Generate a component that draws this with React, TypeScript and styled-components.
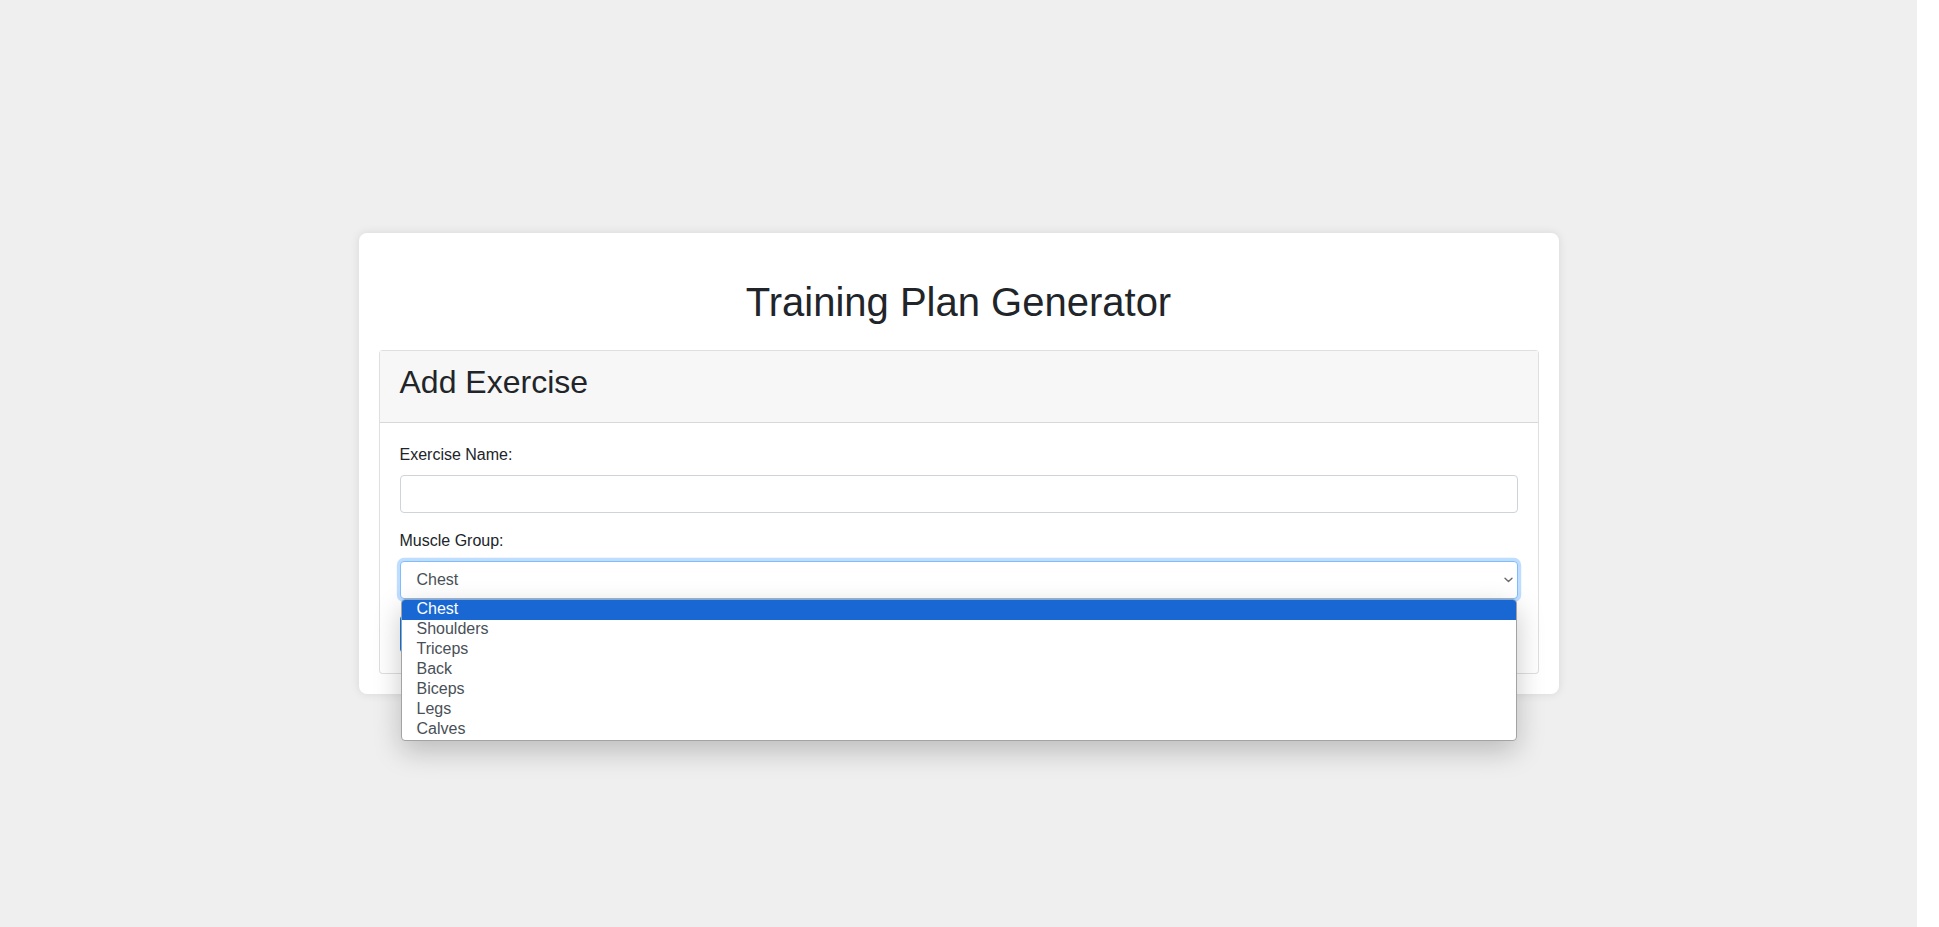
import React, { useState } from 'react';
import styled, { createGlobalStyle, css } from 'styled-components';

const GlobalStyle = createGlobalStyle`
  html,
  body {
    margin: 0;
    padding: 0;
    background: #fff;
  }
  body {
    font-family: 'Liberation Sans', Arial, Helvetica, sans-serif;
    color: #212529;
  }
  * {
    box-sizing: border-box;
  }
`;

const MUSCLE_GROUPS = ['Chest', 'Shoulders', 'Triceps', 'Back', 'Biceps', 'Legs', 'Calves'];

const Shell = styled.div`
  display: flex;
  min-height: 100vh;
`;

const Page = styled.main`
  flex: 1;
  background: #efefef;
  display: flex;
  align-items: center;
  justify-content: center;
`;

const Gutter = styled.div`
  width: 22px;
  flex-shrink: 0;
  background: #fff;
`;

const Card = styled.div`
  width: 1200px;
  background: #fff;
  border-radius: 8px;
  box-shadow: 0 0 10px rgba(0, 0, 0, 0.1);
  padding: 20px;
`;

const Title = styled.h1`
  margin: 25px 0 24px;
  font-size: 40px;
  font-weight: 400;
  line-height: 1.2;
  text-align: center;
  color: #212529;
`;

const Panel = styled.section`
  border: 1px solid rgba(0, 0, 0, 0.125);
  border-radius: 4px;
  background: #fff;
`;

const PanelHeader = styled.header`
  background: #f7f7f7;
  padding: 12px 20px;
  border-bottom: 1px solid rgba(0, 0, 0, 0.125);

  h2 {
    margin: 0 0 8px;
    font-size: 32px;
    font-weight: 400;
    line-height: 1.2;
    color: #212529;
  }
`;

const PanelBody = styled.form`
  padding: 20px;
`;

const Field = styled.div`
  margin-bottom: 16px;
`;

const Label = styled.label`
  display: block;
  margin-bottom: 8px;
  font-size: 16px;
  line-height: 1.5;
  color: #212529;
`;

const controlStyles = css<{ $focused?: boolean }>`
  display: block;
  width: 100%;
  height: 38px;
  padding: 6px 12px;
  font-family: inherit;
  font-size: 16px;
  line-height: 1.5;
  color: #495057;
  background: #fff;
  border: 1px solid #ced4da;
  border-radius: 4px;
  outline: none;

  ${p =>
    p.$focused &&
    css`
      border-color: #80bdff;
      box-shadow: 0 0 0 3.2px rgba(0, 123, 255, 0.25);
    `}
`;

const TextInput = styled.input<{ $focused?: boolean }>`
  ${controlStyles}
`;

const SelectWrap = styled.div`
  position: relative;
`;

const Select = styled.select<{ $focused?: boolean }>`
  ${controlStyles}
  appearance: none;
  -webkit-appearance: none;
  padding-left: 16px;
  padding-right: 24px;
`;

const Chevron = styled.svg`
  position: absolute;
  top: 16px;
  right: 5px;
  width: 9px;
  height: 6px;
  pointer-events: none;
`;

const OptionList = styled.ul`
  position: absolute;
  top: 100%;
  left: 1px;
  right: 1px;
  z-index: 10;
  margin: 0;
  padding: 0;
  list-style: none;
  background: #fff;
  border: 1px solid #a3a3a3;
  border-radius: 4px;
  overflow: hidden;
  box-shadow: 0 10px 28px rgba(0, 0, 0, 0.22);
`;

const OptionItem = styled.li<{ $active?: boolean }>`
  height: 20px;
  padding-left: 15px;
  font-size: 16px;
  line-height: 17px;
  color: ${p => (p.$active ? '#fff' : '#495057')};
  background: ${p => (p.$active ? '#1967d2' : 'transparent')};
  cursor: default;
`;

const SubmitButton = styled.button`
  display: inline-block;
  height: 38px;
  padding: 6px 12px;
  font-family: inherit;
  font-size: 16px;
  line-height: 1.5;
  color: #fff;
  background: #007bff;
  border: 1px solid #007bff;
  border-radius: 4px;
`;

const App: React.FC = () => {
  const [name, setName] = useState('');
  const [group, setGroup] = useState('Chest');
  const [open, setOpen] = useState(true);

  return (
    <>
      <GlobalStyle />
      <Shell>
        <Page>
          <Card>
            <Title>Training Plan Generator</Title>
            <Panel>
              <PanelHeader>
                <h2>Add Exercise</h2>
              </PanelHeader>
              <PanelBody onSubmit={e => e.preventDefault()}>
                <Field>
                  <Label htmlFor="exercise-name">Exercise Name:</Label>
                  <TextInput
                    id="exercise-name"
                    type="text"
                    value={name}
                    onChange={e => setName(e.target.value)}
                  />
                </Field>
                <Field>
                  <Label htmlFor="muscle-group">Muscle Group:</Label>
                  <SelectWrap>
                    <Select
                      id="muscle-group"
                      $focused={open}
                      value={group}
                      onChange={e => setGroup(e.target.value)}
                      onMouseDown={e => {
                        e.preventDefault();
                        setOpen(!open);
                      }}
                    >
                      {MUSCLE_GROUPS.map(g => (
                        <option key={g} value={g}>
                          {g}
                        </option>
                      ))}
                    </Select>
                    <Chevron viewBox="0 0 9 6" aria-hidden="true">
                      <path
                        d="M1 1.2 L4.5 4.6 L8 1.2"
                        fill="none"
                        stroke="#6b6b6b"
                        strokeWidth="1.4"
                        strokeLinecap="round"
                        strokeLinejoin="round"
                      />
                    </Chevron>
                    {open && (
                      <OptionList role="listbox">
                        {MUSCLE_GROUPS.map(g => (
                          <OptionItem
                            key={g}
                            role="option"
                            $active={g === group}
                            onClick={() => {
                              setGroup(g);
                              setOpen(false);
                            }}
                          >
                            {g}
                          </OptionItem>
                        ))}
                      </OptionList>
                    )}
                  </SelectWrap>
                </Field>
                <SubmitButton type="submit">Add Exercise</SubmitButton>
              </PanelBody>
            </Panel>
          </Card>
        </Page>
        <Gutter />
      </Shell>
    </>
  );
};

export default App;
